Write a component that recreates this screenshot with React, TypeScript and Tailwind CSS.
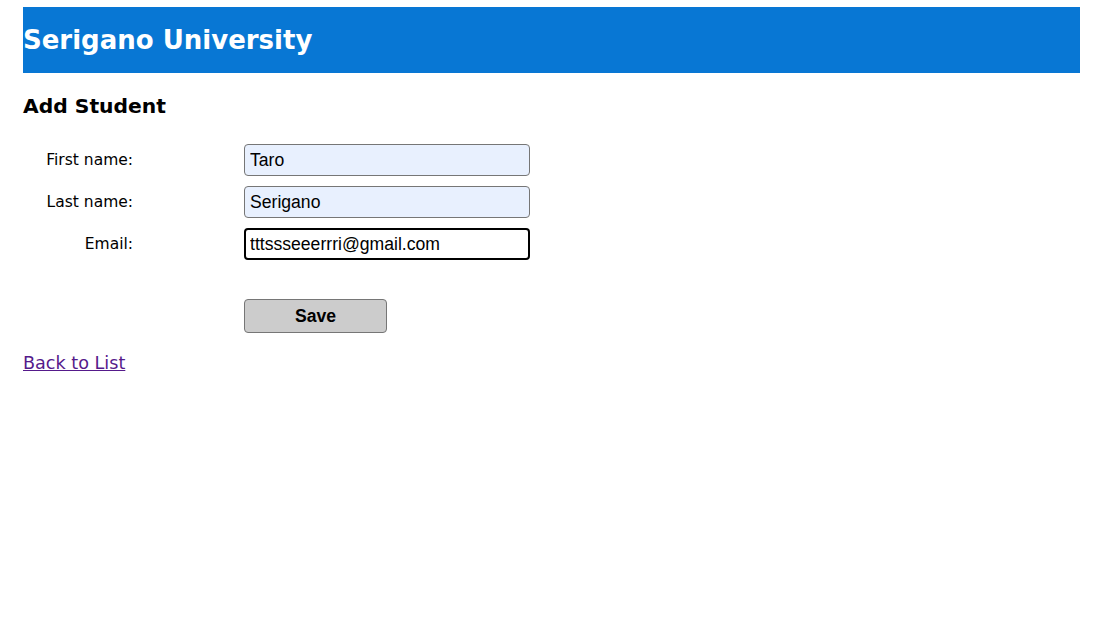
import React from "react";

type Field = {
  label: string;
  value: string;
  autofilled?: boolean;
  focused?: boolean;
};

const fields: Field[] = [
  { label: "First name:", value: "Taro", autofilled: true },
  { label: "Last name:", value: "Serigano", autofilled: true },
  { label: "Email:", value: "tttssseeerrri@gmail.com", focused: true },
];

export default function App() {
  return (
    <div className="min-h-screen bg-white pl-[23px] pr-[21px] pt-[7px] text-black [font-family:'DejaVu_Sans',Verdana,sans-serif]">
      <header className="flex h-[66px] items-center bg-[#0877d4]">
        <h1 className="text-[26px] font-bold leading-none text-white">Serigano University</h1>
      </header>

      <h2 className="mt-[23px] text-[20.3px] font-bold leading-none">Add Student</h2>

      <form className="mt-[28px] flex flex-col gap-[10px]">
        {fields.map((f) => (
          <div key={f.label} className="flex items-center">
            <label className="w-[110px] text-right text-[15.5px]">{f.label}</label>
            <input
              defaultValue={f.value}
              className={`ml-[111px] h-[32px] w-[286px] rounded-[4px] text-[17.6px] text-black outline-none [font-family:'Liberation_Sans',Arial,sans-serif] ${
                f.focused
                  ? "border-2 border-black bg-white px-[4px]"
                  : "border border-[#767676] bg-[#e8f0fe] px-[5px]"
              }`}
            />
          </div>
        ))}

        <div className="mt-[29px] flex">
          <button
            type="button"
            className="ml-[221px] h-[34px] w-[143px] rounded-[4px] border border-[#767676] bg-[#cccccc] text-[17.6px] font-bold [font-family:'Liberation_Sans',Arial,sans-serif]"
          >
            Save
          </button>
        </div>
      </form>

      <a href="#" className="mt-[19px] inline-block text-[17.6px] leading-[23px] text-[#551a8b] underline">
        Back to List
      </a>
    </div>
  );
}
